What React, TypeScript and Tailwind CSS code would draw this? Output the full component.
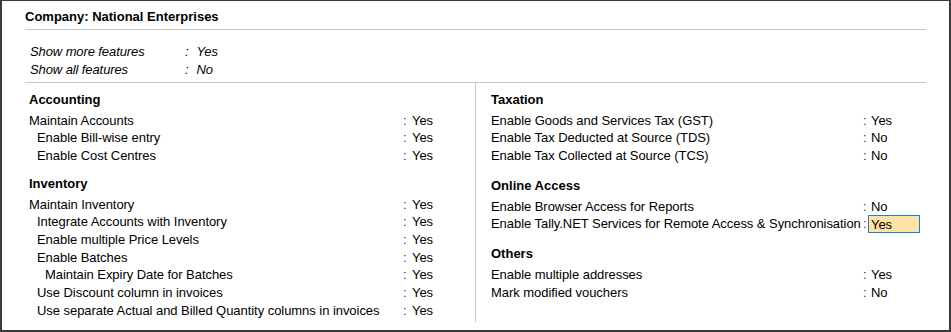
import React from "react";

type Row = { label: string; value: string; indent?: number; highlight?: boolean };
type Section = { title: string; rows: Row[]; mt?: string };

const leftSections: Section[] = [
  {
    title: "Accounting",
    rows: [
      { label: "Maintain Accounts", value: "Yes" },
      { label: "Enable Bill-wise entry", value: "Yes", indent: 1 },
      { label: "Enable Cost Centres", value: "Yes", indent: 1 },
    ],
  },
  {
    title: "Inventory",
    mt: "mt-[7px]",
    rows: [
      { label: "Maintain Inventory", value: "Yes" },
      { label: "Integrate Accounts with Inventory", value: "Yes", indent: 1 },
      { label: "Enable multiple Price Levels", value: "Yes", indent: 1 },
      { label: "Enable Batches", value: "Yes", indent: 1 },
      { label: "Maintain Expiry Date for Batches", value: "Yes", indent: 2 },
      { label: "Use Discount column in invoices", value: "Yes", indent: 1 },
      { label: "Use separate Actual and Billed Quantity columns in invoices", value: "Yes", indent: 1 },
    ],
  },
];

const rightSections: Section[] = [
  {
    title: "Taxation",
    rows: [
      { label: "Enable Goods and Services Tax (GST)", value: "Yes" },
      { label: "Enable Tax Deducted at Source (TDS)", value: "No" },
      { label: "Enable Tax Collected at Source (TCS)", value: "No" },
    ],
  },
  {
    title: "Online Access",
    mt: "mt-[9px]",
    rows: [
      { label: "Enable Browser Access for Reports", value: "No" },
      { label: "Enable Tally.NET Services for Remote Access & Synchronisation", value: "Yes", highlight: true },
    ],
  },
  {
    title: "Others",
    mt: "mt-[9px]",
    rows: [
      { label: "Enable multiple addresses", value: "Yes" },
      { label: "Mark modified vouchers", value: "No" },
    ],
  },
];

function SectionBlock({ s, labelW, side }: { s: Section; labelW: string; side: "l" | "r" }) {
  return (
    <div className={s.mt ?? ""}>
      <div className="h-[24px] flex items-center font-bold text-[13px] pt-[1px]">{s.title}</div>
      {s.rows.map((r) => (
        <div key={r.label} className="h-[17.7px] flex items-center whitespace-nowrap tracking-[-0.05px]">
          <div
            className={`${labelW} ${
              r.indent === 1 ? "pl-[8px]" : r.indent === 2 ? "pl-[16px]" : ""
            } overflow-hidden pt-[1px]`}
          >
            {r.label}
          </div>
          <span className="text-[#333] pt-[1px]">:</span>
          {r.highlight ? (
            <span className="ml-[1.4px] h-[18px] w-[52px] border border-[#1f7fc9] bg-[#ffe3a6] pl-[2px] pt-[1px] flex items-center leading-none">
              {r.value}
            </span>
          ) : (
            <span className={`pt-[1px] ${side === "l" ? "ml-[5.4px]" : "ml-[4.4px]"}`}>{r.value}</span>
          )}
        </div>
      ))}
    </div>
  );
}

export default function App() {
  return (
    <div
      className="w-[951px] h-[332px] bg-white border-l-2 border-r-2 border-t border-b-2 border-[#3a3a3a] text-black text-[13px] overflow-hidden"
      style={{ fontFamily: '"Liberation Sans", Arial, sans-serif' }}
    >
      <div className="pl-[23px] mr-[23px]">
        <div className="pt-[8px] pb-[4px] leading-[16px] font-bold text-[13px] border-b border-[#c8c8c8]">
          Company: National Enterprises
        </div>
        <div className="pt-[12px] pb-[4px] border-b border-[#c8c8c8] italic tracking-[-0.1px]">
          <div className="h-[18px] flex items-center pl-[5px] pt-[1px]">
            <span className="w-[155px]">Show more features</span>
            <span>:</span>
            <span className="ml-[8px]">Yes</span>
          </div>
          <div className="h-[18px] flex items-center pl-[5px] pt-[1px]">
            <span className="w-[155px]">Show all features</span>
            <span>:</span>
            <span className="ml-[8px]">No</span>
          </div>
        </div>
        <div className="flex h-[239px]">
          <div className="w-[451px] border-r border-[#c8c8c8] pl-[4px] pt-[4px]">
            {leftSections.map((s) => (
              <SectionBlock key={s.title} s={s} labelW="w-[374px]" side="l" />
            ))}
          </div>
          <div className="flex-1 pl-[15px] pt-[4px]">
            {rightSections.map((s) => (
              <SectionBlock key={s.title} s={s} labelW="w-[372px]" side="r" />
            ))}
          </div>
        </div>
      </div>
    </div>
  );
}
